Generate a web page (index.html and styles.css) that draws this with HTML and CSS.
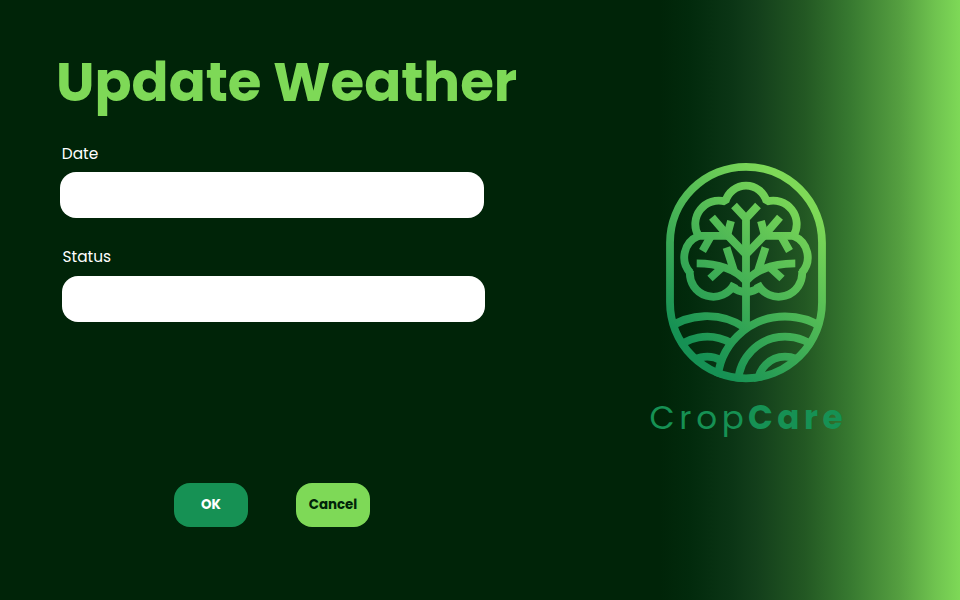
FILE: index.html
```html
<!DOCTYPE html>
<html lang="en">
<head>
<meta charset="utf-8">
<title>Update Weather</title>
<link rel="stylesheet" href="styles.css">
</head>
<body>
<main class="page">
  <form class="form">
    <h1 class="title">Update Weather</h1>
    <div class="field">
      <label class="label label-date" for="date">Date</label>
      <input class="input" id="date" type="text">
    </div>
    <div class="field field-status">
      <label class="label label-status" for="status">Status</label>
      <input class="input" id="status" type="text">
    </div>
    <div class="actions">
      <button class="button ok" type="button">OK</button>
      <button class="button cancel" type="button">Cancel</button>
    </div>
  </form>
  <aside class="brand">
    <svg class="logo" viewBox="660 156 172 232" fill="none" stroke="url(#leaf)" stroke-width="7.8">
      <defs>
        <linearGradient id="leaf" gradientUnits="userSpaceOnUse" x1="682" y1="336" x2="806" y2="204">
          <stop offset="0" stop-color="#169154"/>
          <stop offset="1" stop-color="#7ed957"/>
        </linearGradient>
        <clipPath id="capsule"><rect x="667" y="163" width="158" height="219" rx="79"/></clipPath>
      </defs>
      <rect x="670" y="166.8" width="152" height="211.5" rx="76"/>
      <path d="M746 329V218.5M734 205.5L746 218.5L758 205.5"/>
      <path stroke-linejoin="bevel" d="M690.5 273A23 23 0 0 1 698.5 236A23.5 23.5 0 0 1 725.4 201.6A21.3 21.3 0 0 1 766.6 201.6A23.5 23.5 0 0 1 793.5 236A23 23 0 0 1 801.5 273"/>
      <path d="M690 270.5A23.5 23.5 0 0 0 734.5 283.5M802 270.5A23.5 23.5 0 0 1 757.5 283.5"/>
      <path d="M731 286.5Q738 291.5 746 292.2Q754 291.5 761 286.5"/>
      <path d="M697 235.8H727M765 235.8H795"/>
      <path d="M712 217.3L728 235.8L746 254.5L764 235.8L780 217.3"/>
      <path d="M731 221L726.5 238M761 221L765.5 238M702.5 251L711 236M789.5 251L781 236"/>
      <path d="M696.7 263.3Q730 263.5 746 281Q762 263.5 795.3 263.3"/>
      <path d="M726.5 247.5L734 271M765.5 247.5L758 271M710 278.5L722 267.5M782 278.5L770 267.5"/>
      <g clip-path="url(#capsule)">
        <path d="M664 331.3A68.7 68.7 0 0 1 746 328.4
          M670 354A48.3 48.3 0 0 1 730.7 342.9
          M684 368.6A28.3 28.3 0 0 1 720.9 360.3"/>
        <circle cx="785" cy="384" r="67.5"/>
        <circle cx="785" cy="383.5" r="46.8"/>
        <circle cx="785" cy="384" r="27.3"/>
      </g>
    </svg>
    <div class="name"><span class="crop">Crop</span><span class="care">Care</span></div>
  </aside>
</main>
</body>
</html>
```
FILE: styles.css
```css
* { box-sizing: border-box; }
body { margin: 0; font-family: Poppins, Inter, sans-serif; }
.page {
  display: flex;
  width: 960px;
  height: 600px;
  overflow: hidden;
  background: linear-gradient(90deg, #002408 0 660px, #022a0c 690px, #0b3515 732px, #133f1b 757px, #235823 805px, #377930 850px, #559f40 900px, #6fc34f 935px, #7ed957 960px);
}
.form { width: 600px; padding: 49px 0 0 60px; }
.title {
  margin: 0 0 29px -4px;
  color: #7ed957;
  font-size: 54.6px;
  font-weight: 700;
  line-height: 66px;
  white-space: nowrap;
}
.field { display: flex; flex-direction: column; width: 424px; }
.field-status { margin: 29px 0 0 2px; width: 423px; }
.label { color: #fff; font-size: 15.4px; line-height: 20px; }
.label-date { margin: 0 0 8px 1.8px; }
.label-status { margin: 0 0 9px 0.5px; }
.input { height: 46px; padding: 0 16px; border: 0; border-radius: 16px; background: #fff; font: inherit; }
.actions { display: flex; gap: 48px; margin: 161px 0 0 114px; }
.button {
  width: 74px;
  height: 44px;
  padding: 0;
  border: 0;
  border-radius: 16px;
  font: 700 13.4px/44px Poppins, Inter, sans-serif;
}
.ok { background: #169154; color: #fff; }
.cancel { background: #7ed957; color: #002408; }
.brand { display: flex; flex-direction: column; width: 360px; padding: 156px 0 0 49px; }
.logo { width: 172px; height: 232px; margin-left: 11px; }
.name { display: flex; color: #169154; font-size: 32.6px; line-height: 40px; margin: 10px 0 0 0.5px; }
.crop { width: 98.5px; font-weight: 400; letter-spacing: 4.7px; }
.care { font-weight: 700; letter-spacing: 4.5px; }
```
